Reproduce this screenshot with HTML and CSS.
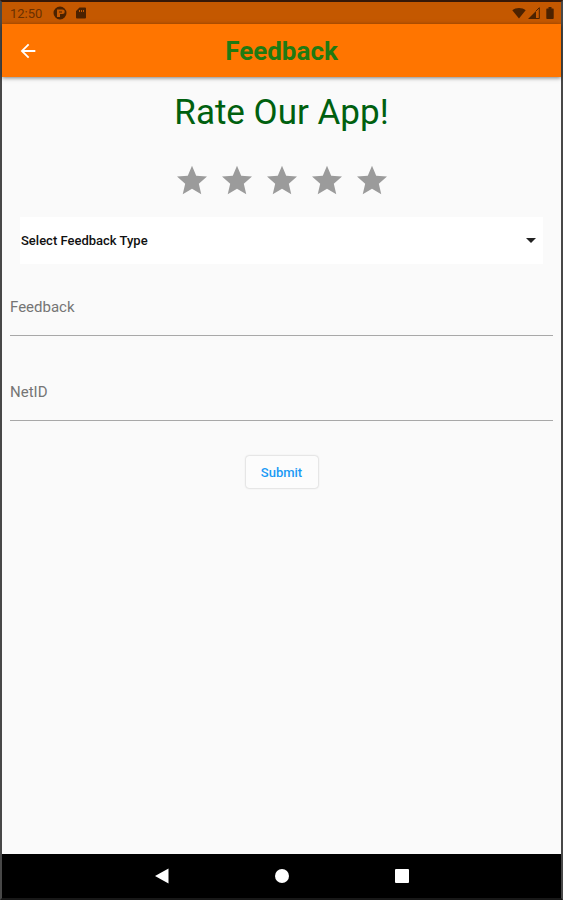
FILE: index.html
```html
<!DOCTYPE html>
<html lang="en">
<head>
<meta charset="utf-8">
<meta name="viewport" content="width=device-width, initial-scale=1">
<title>Feedback</title>
<link rel="stylesheet" href="styles.css">
</head>
<body>
<div class="device">
  <div class="status">
    <span class="clock">12:50</span>
    <svg class="status-icon" viewBox="0 0 14 14" aria-hidden="true"><path fill-rule="evenodd" d="M7 .5a6.500 6.500 0 1 0 0 13 6.500 6.500 0 0 0 0-13zM4 3.500h5.500a2.200 2.200 0 0 1 0 4.500H7v3H4zM6 5.500h3v1H6z"/></svg>
    <svg class="status-icon" viewBox="0 0 14 14" aria-hidden="true"><path fill-rule="evenodd" d="M5.500 1.500H11a1 1 0 0 1 1 1v9a1 1 0 0 1-1 1H3a1 1 0 0 1-1-1V5zM5 4v2h1V4zm2 0v2h1V4zm2 0v2h1V4z"/></svg>
    <span class="spacer"></span>
    <svg class="wifi" viewBox="0 0 14 12" aria-hidden="true"><path d="M7 11.500.3 3.200C4 .2 10 .2 13.700 3.200z"/></svg>
    <svg class="signal" viewBox="0 0 12 12" aria-hidden="true"><path d="M0 12 8 4v8z"/><path class="outline" d="M8 4l3.300-3.300v10.800H8"/></svg>
    <svg class="battery" viewBox="0 0 8 12" aria-hidden="true"><path d="M2.500 0h3v1.500H7a.7.7 0 0 1 .7.7v9a.8.8 0 0 1-.8.800H1.100a.8.8 0 0 1-.8-.8v-9a.7.7 0 0 1 .7-.7h1.500z"/></svg>
  </div>
  <header class="appbar">
    <button class="back" type="button" aria-label="Back"><svg viewBox="0 0 24 24"><path d="M20 11H7.830l5.590-5.590L12 4l-8 8 8 8 1.410-1.410L7.830 13H20z"/></svg></button>
    <h1 class="title">Feedback</h1>
  </header>
  <main class="content">
    <h2 class="headline">Rate Our App!</h2>
    <div class="stars" role="group" aria-label="Rating">
      <button class="star" type="button" aria-label="1 star"><svg viewBox="2 2 20 19"><path d="M12 17.270 18.180 21l-1.640-7.030L22 9.240l-7.190-.61L12 2 9.190 8.630 2 9.240l5.460 4.730L5.820 21z"/></svg></button>
      <button class="star" type="button" aria-label="2 stars"><svg viewBox="2 2 20 19"><path d="M12 17.270 18.180 21l-1.640-7.030L22 9.240l-7.190-.61L12 2 9.190 8.630 2 9.240l5.460 4.730L5.820 21z"/></svg></button>
      <button class="star" type="button" aria-label="3 stars"><svg viewBox="2 2 20 19"><path d="M12 17.270 18.180 21l-1.640-7.030L22 9.240l-7.190-.61L12 2 9.190 8.630 2 9.240l5.460 4.730L5.820 21z"/></svg></button>
      <button class="star" type="button" aria-label="4 stars"><svg viewBox="2 2 20 19"><path d="M12 17.270 18.180 21l-1.640-7.030L22 9.240l-7.190-.61L12 2 9.190 8.630 2 9.240l5.460 4.730L5.820 21z"/></svg></button>
      <button class="star" type="button" aria-label="5 stars"><svg viewBox="2 2 20 19"><path d="M12 17.270 18.180 21l-1.640-7.030L22 9.240l-7.190-.61L12 2 9.190 8.630 2 9.240l5.460 4.730L5.820 21z"/></svg></button>
    </div>
    <form class="form">
      <div class="picker">
        <select class="select" aria-label="Feedback type"><option>Select Feedback Type</option></select>
        <svg class="caret" viewBox="0 0 10 5" aria-hidden="true"><path d="M0 0h10L5 5z"/></svg>
      </div>
      <div class="fields">
        <div class="field">
          <label for="feedback">Feedback</label>
          <input id="feedback" type="text">
        </div>
        <div class="field">
          <label for="netid">NetID</label>
          <input id="netid" type="text">
        </div>
      </div>
      <button class="submit" type="button">Submit</button>
    </form>
  </main>
  <nav class="navbar">
    <button type="button" aria-label="Back"><svg viewBox="0 0 16 16"><path d="M1 8 14.500.5v15z"/></svg></button>
    <button type="button" aria-label="Home"><svg viewBox="0 0 16 16"><circle cx="8" cy="8" r="7"/></svg></button>
    <button type="button" aria-label="Recent apps"><svg viewBox="0 0 16 16"><rect x="1" y="1" width="14" height="14" rx="1"/></svg></button>
  </nav>
</div>
</body>
</html>
```
FILE: styles.css
```css
* {
  box-sizing: border-box;
}

body {
  margin: 0;
  font-family: Roboto, "Liberation Sans", sans-serif;
  background: #fafafa;
}

button {
  padding: 0;
  border: 0;
  background: none;
  font-family: inherit;
}

svg {
  display: block;
}

.device {
  display: flex;
  flex-direction: column;
  min-height: 100vh;
  border: 2px solid #484848;
  border-top-color: #351808;
  border-bottom-color: #181818;
}

.status {
  display: flex;
  align-items: center;
  height: 22px;
  padding: 0 7px 0 8px;
  background: #c45800;
  color: #6b3000;
}

.clock {
  margin-right: 11px;
  font-size: 13px;
}

.status svg {
  fill: #4c2200;
}

.status-icon {
  width: 14px;
  height: 14px;
  margin-right: 7px;
}

.spacer {
  flex: 1;
}

.wifi {
  width: 14px;
  height: 12px;
  margin-right: 2px;
}

.signal {
  width: 12px;
  height: 12px;
  margin-right: 6px;
}

.status .outline {
  fill: none;
  stroke: #4c2200;
}

.battery {
  width: 8px;
  height: 12px;
}

.appbar {
  display: grid;
  grid-template-columns: 52px 1fr 52px;
  align-items: center;
  height: 53px;
  background: #ff7500;
  box-shadow: 0 1px 4px rgba(0, 0, 0, 0.5);
}

.back svg {
  width: 22px;
  height: 22px;
  margin: 0 auto;
  fill: #fff;
}

.title {
  margin: 0;
  text-align: center;
  font-size: 26px;
  font-weight: 700;
  line-height: 32px;
  color: #1f7a12;
}

.content {
  flex: 1;
  padding: 12px 8px;
}

.headline {
  margin: 0;
  text-align: center;
  font-size: 35px;
  font-weight: 400;
  line-height: 48px;
  color: #00600f;
}

.stars {
  display: flex;
  justify-content: center;
  gap: 15px;
  margin-top: 28px;
}

.star svg {
  width: 30px;
  height: 30px;
  fill: #9b9b9b;
}

.form {
  display: flex;
  flex-direction: column;
}

.picker {
  position: relative;
  margin: 22px 10px 0;
}

.select {
  appearance: none;
  display: block;
  width: 100%;
  height: 47px;
  padding: 0 32px 0 1px;
  border: 0;
  border-radius: 0;
  background: #fff;
  font-family: inherit;
  font-size: 13px;
  font-weight: 500;
  color: #111;
}

.caret {
  position: absolute;
  top: 21px;
  right: 7px;
  width: 10px;
  height: 5px;
  fill: #222;
  pointer-events: none;
}

.fields {
  display: flex;
  flex-direction: column;
  gap: 46px;
  margin-top: 33px;
}

.field {
  display: flex;
  flex-direction: column;
}

.field label {
  font-size: 15px;
  line-height: 20px;
  color: #757575;
}

.field input {
  height: 19px;
  padding: 0;
  border: 0;
  border-bottom: 1px solid #a8a8a8;
  background: none;
  font-family: inherit;
  font-size: 15px;
  outline: none;
}

.submit {
  align-self: center;
  width: 72px;
  height: 32px;
  margin-top: 35px;
  border-radius: 3px;
  background: #fcfcfc;
  box-shadow: 0 0 2px rgba(0, 0, 0, 0.3);
  font-size: 13px;
  font-weight: 500;
  color: #1a9af5;
}

.navbar {
  display: flex;
  justify-content: center;
  align-items: center;
  gap: 104px;
  height: 44px;
  background: #000;
}

.navbar svg {
  width: 16px;
  height: 16px;
  fill: #fff;
}
```
